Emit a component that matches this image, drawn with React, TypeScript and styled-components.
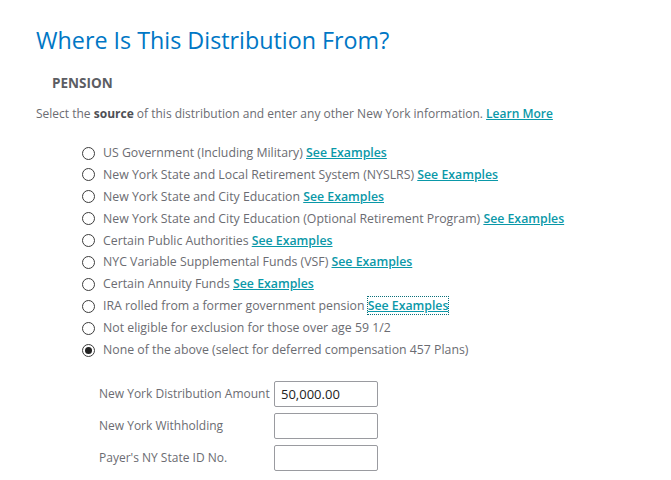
import React from 'react';
import styled, { createGlobalStyle } from 'styled-components';

const Global = createGlobalStyle`
  body {
    margin: 0;
    background: #fff;
    font-family: "Open Sans", "Liberation Sans", sans-serif;
    color: #6b6c72;
  }
`;

const Page = styled.div`
  padding: 25px 0 0 36px;
`;

const Title = styled.h1`
  margin: 0;
  font-size: 23.3px;
  font-weight: 400;
  color: #0077c5;
  line-height: 30px;
`;

const Section = styled.h2`
  margin: 18px 0 0 16px;
  font-size: 13.5px;
  font-weight: 700;
  color: #5c5d63;
  line-height: 20px;
`;

const Intro = styled.p`
  margin: 11px 0 0;
  font-size: 12px;
  line-height: 20px;
  b { font-weight: 700; color: #4e4f55; }
`;

const Link = styled.a<{ $focus?: boolean }>`
  color: #0a98a8;
  font-weight: 600;
  text-decoration: underline;
  outline: ${p => (p.$focus ? '1px dotted #0a6f7a' : 'none')};
  cursor: pointer;
`;

const List = styled.div`
  margin: 19px 0 0 46px;
  display: flex;
  flex-direction: column;
  gap: 1.9px;
`;

const Option = styled.label`
  display: flex;
  align-items: center;
  gap: 8px;
  font-size: 12.3px;
  line-height: 20px;
  cursor: pointer;
`;

const Radio = styled.span<{ $on?: boolean }>`
  width: 13px;
  height: 13px;
  border-radius: 50%;
  border: 1.4px solid #3c3c3c;
  box-sizing: border-box;
  display: flex;
  align-items: center;
  justify-content: center;
  flex-shrink: 0;
  &::after {
    content: '';
    width: 7px;
    height: 7px;
    border-radius: 50%;
    background: ${p => (p.$on ? '#222' : 'transparent')};
  }
`;

const Form = styled.div`
  margin: 21px 0 0 63px;
  display: grid;
  grid-template-columns: 175px 104px;
  row-gap: 6px;
  align-items: center;
`;

const FieldLabel = styled.span`
  font-size: 12px;
  line-height: 20px;
  white-space: nowrap;
`;

const Input = styled.input`
  box-sizing: border-box;
  width: 104px;
  height: 26px;
  border: 1px solid #9a9ba0;
  border-radius: 2px;
  padding: 0 6px;
  font-family: "Open Sans", "Liberation Sans", sans-serif;
  font-size: 13px;
  color: #222;
  outline: none;
`;

const options: { text: string; link?: boolean; focus?: boolean; on?: boolean }[] = [
  { text: 'US Government (Including Military)', link: true },
  { text: 'New York State and Local Retirement System (NYSLRS)', link: true },
  { text: 'New York State and City Education', link: true },
  { text: 'New York State and City Education (Optional Retirement Program)', link: true },
  { text: 'Certain Public Authorities', link: true },
  { text: 'NYC Variable Supplemental Funds (VSF)', link: true },
  { text: 'Certain Annuity Funds', link: true },
  { text: 'IRA rolled from a former government pension', link: true, focus: true },
  { text: 'Not eligible for exclusion for those over age 59 1/2' },
  { text: 'None of the above (select for deferred compensation 457 Plans)', on: true },
];

export default function App() {
  return (
    <Page>
      <Global />
      <Title>Where Is This Distribution From?</Title>
      <Section>PENSION</Section>
      <Intro>
        Select the <b>source</b> of this distribution and enter any other New York information.{' '}
        <Link>Learn More</Link>
      </Intro>
      <List>
        {options.map(o => (
          <Option key={o.text}>
            <Radio $on={o.on} />
            <span>
              {o.text}
              {o.link && (
                <>
                  {' '}
                  <Link $focus={o.focus}>See Examples</Link>
                </>
              )}
            </span>
          </Option>
        ))}
      </List>
      <Form>
        <FieldLabel>New York Distribution Amount</FieldLabel>
        <Input defaultValue="50,000.00" />
        <FieldLabel>New York Withholding</FieldLabel>
        <Input />
        <FieldLabel>Payer's NY State ID No.</FieldLabel>
        <Input />
      </Form>
    </Page>
  );
}
